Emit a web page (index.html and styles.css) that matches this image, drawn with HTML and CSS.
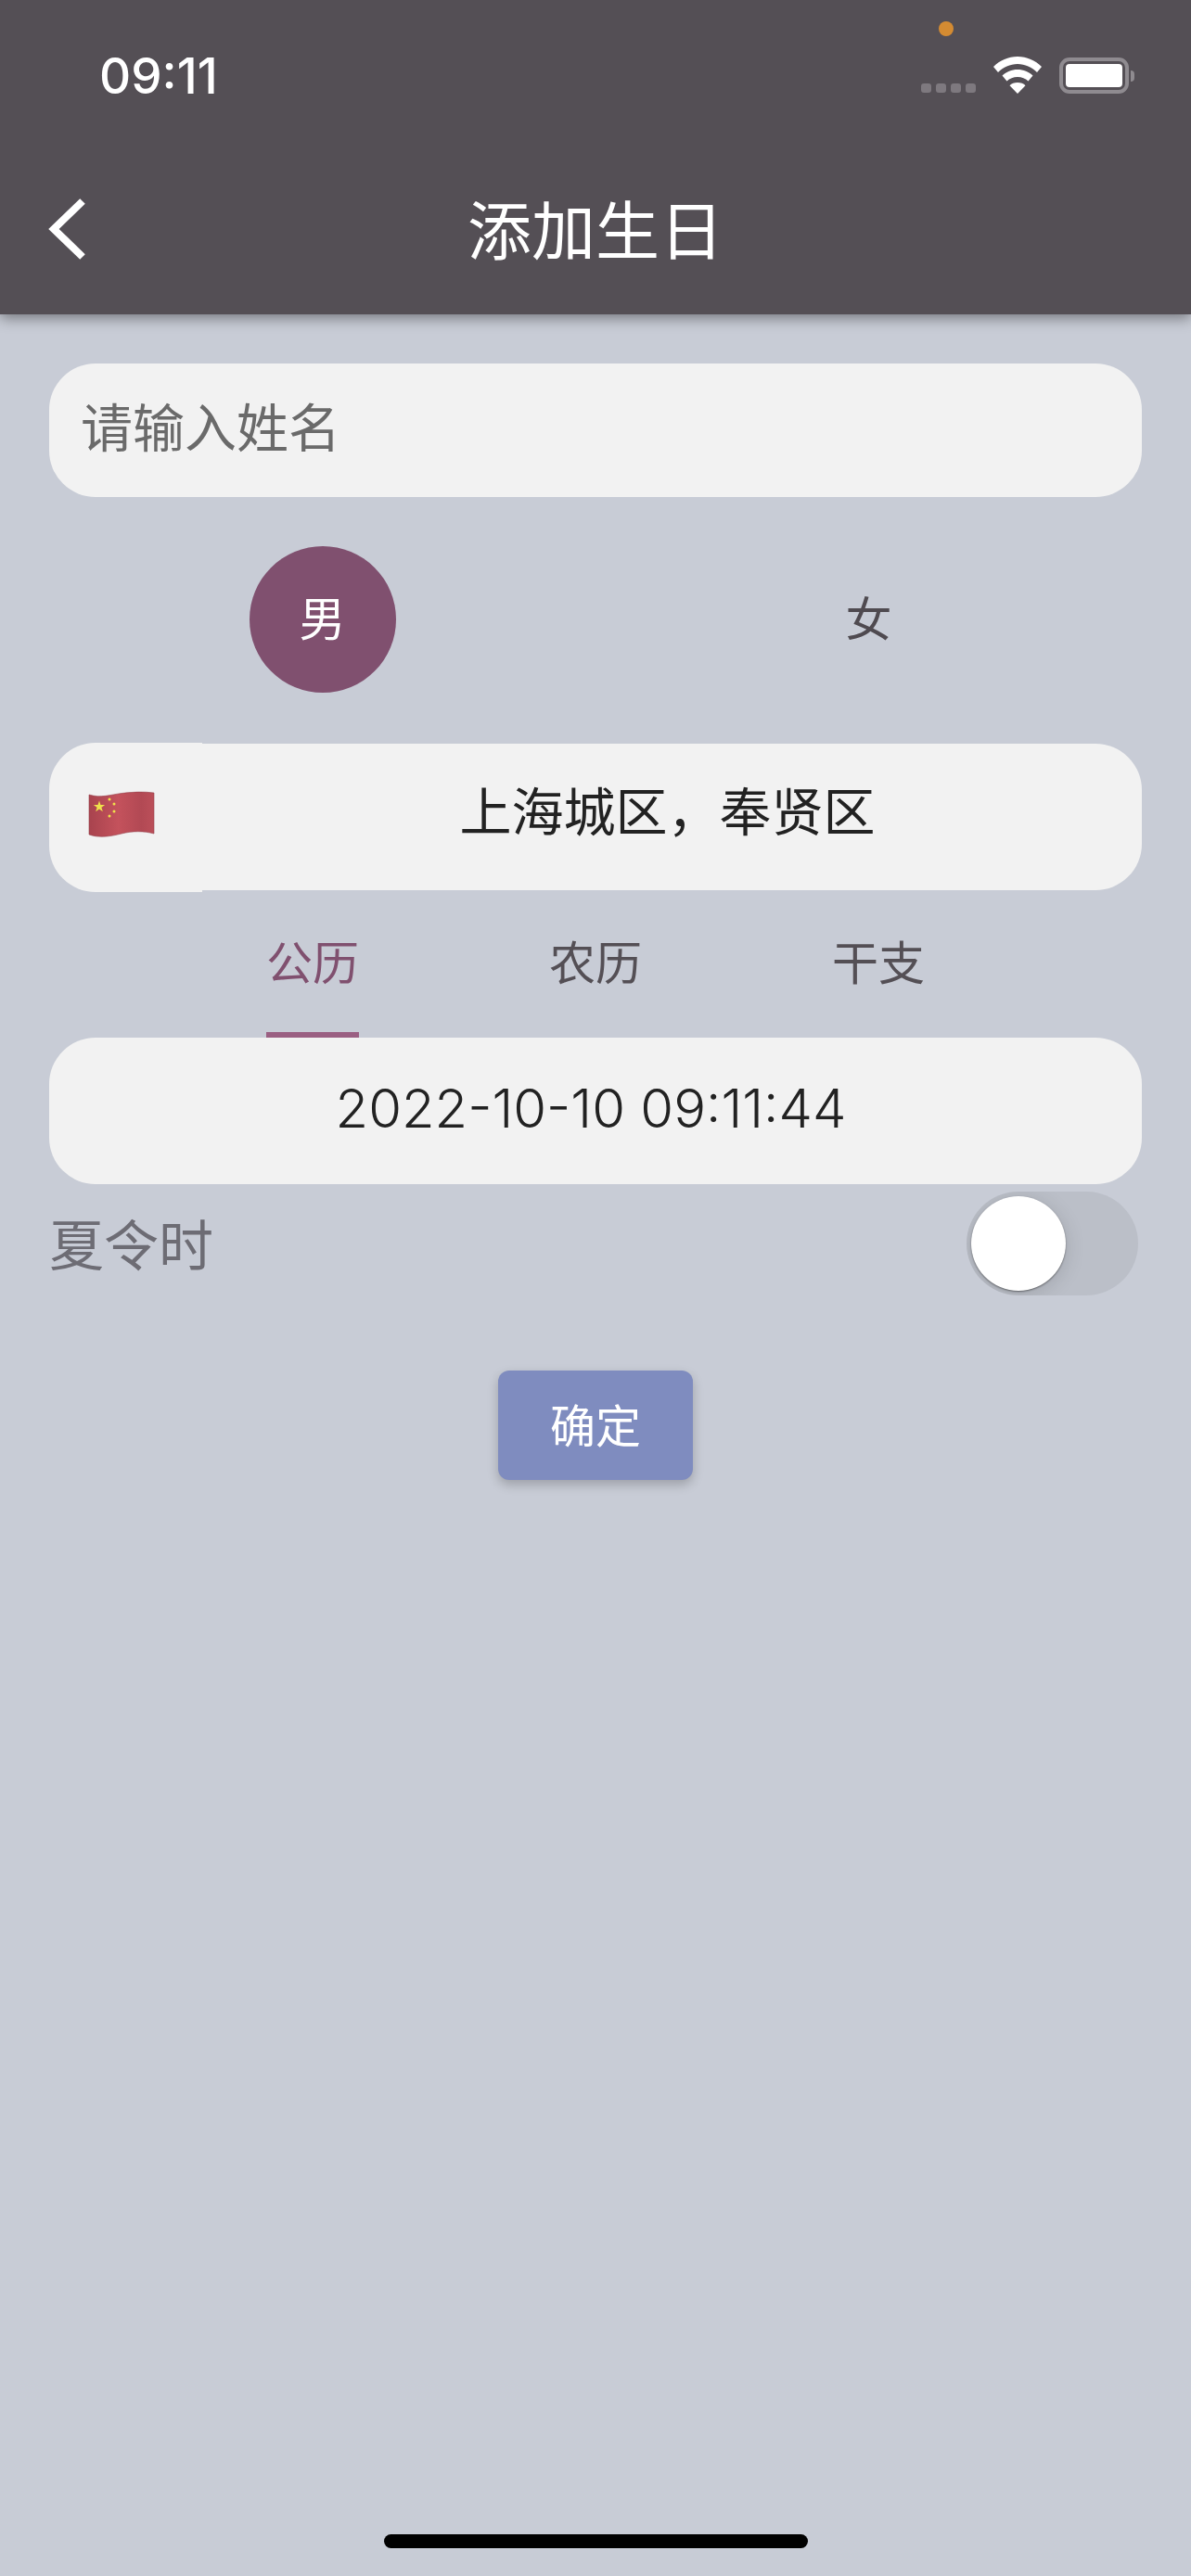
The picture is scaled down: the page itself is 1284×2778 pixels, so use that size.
FILE: index.html
```html
<!DOCTYPE html>
<html lang="zh-CN">
<head>
    <meta charset="UTF-8">
    <meta name="viewport" content="width=device-width, initial-scale=1.0">
    <title>添加生日</title>
    <link rel="stylesheet" href="styles.css">
</head>
<body>

    <header class="app-bar">
        <span class="record-dot"></span>
        <div class="status-bar">
            <span class="status-time">09:11</span>
            <div class="status-icons">
                <div class="signal-dots"><i></i><i></i><i></i><i></i></div>
                <svg class="wifi-icon" width="54" height="40" viewBox="0 0 54 40">
                    <path fill="#fff" d="M27 0C17 0 8 4 1 11l5 6c5.500-5.500 13-9 21-9s15.500 3.500 21 9l5-6C46 4 37 0 27 0z"/>
                    <path fill="#fff" d="M27 14c-6.500 0-12 2.500-16.500 6.500l5 6C18.500 23.500 22.500 22 27 22s8.500 1.500 11.500 4.500l5-6C39 16.500 33.500 14 27 14z"/>
                    <path fill="#fff" d="M27 28c-3.500 0-6.500 1.200-8.500 3.200L27 40l8.500-8.800C33.500 29.200 30.500 28 27 28z"/>
                </svg>
                <div class="battery">
                    <div class="battery-body"><div class="battery-fill"></div></div>
                    <span class="battery-cap"></span>
                </div>
            </div>
        </div>
        <div class="title-row">
            <svg class="back-icon" width="44" height="66" viewBox="0 0 44 66">
                <path fill="none" stroke="#fff" stroke-width="8" stroke-linejoin="miter" d="M38 3 L7 33 L38 63"/>
            </svg>
            <h1 class="page-title">添加生日</h1>
        </div>
    </header>

    <main class="form">
        <div class="name-input">请输入姓名</div>

        <div class="gender-row">
            <div class="gender-cell"><span class="gender-option gender-active">男</span></div>
            <div class="gender-cell"><span class="gender-option">女</span></div>
        </div>

        <div class="place-row">
            <div class="flag-chip">
                <svg class="flag-icon" width="72" height="52" viewBox="0 0 72 52">
                    <defs>
                        <linearGradient id="flagShade" x1="0" y1="0" x2="1" y2="0">
                            <stop offset="0" stop-color="#a8434e"/>
                            <stop offset="0.45" stop-color="#c4525c"/>
                            <stop offset="0.8" stop-color="#b24954"/>
                            <stop offset="1" stop-color="#bb4f59"/>
                        </linearGradient>
                    </defs>
                    <path fill="url(#flagShade)" stroke="#96424c" stroke-width="0.6" d="M1 4C14 8 24 4 36 2.500C48 1 60 .5 71 2V46C60 43 48 43 36 46C24 49 12 51 1 47z"/>
                    <polygon fill="#efe14b" points="12,10.500 13.470,14.980 18.180,15 14.380,17.770 15.820,22.260 12,19.500 8.180,22.260 9.620,17.770 5.820,15 10.530,14.980"/>
                    <circle fill="#efe14b" cx="23" cy="9" r="1.500"/>
                    <circle fill="#efe14b" cx="28" cy="14" r="1.500"/>
                    <circle fill="#efe14b" cx="28" cy="22" r="1.500"/>
                    <circle fill="#efe14b" cx="23" cy="27" r="1.500"/>
                </svg>
            </div>
            <div class="place-text">上海城区，奉贤区</div>
        </div>

        <div class="calendar-tabs">
            <div class="tab tab-active"><span class="tab-label">公历</span></div>
            <div class="tab"><span class="tab-label">农历</span></div>
            <div class="tab"><span class="tab-label">干支</span></div>
        </div>

        <div class="date-card">2022-10-10 09:11:44</div>

        <div class="dst-row">
            <span class="dst-label">夏令时</span>
            <div class="switch"><span class="switch-knob"></span></div>
        </div>

        <div class="submit-row">
            <button class="submit-btn">确定</button>
        </div>
    </main>

    <div class="home-indicator"></div>

</body>
</html>
```

FILE: styles.css
```css
body {
    margin: 0;
    width: 1284px;
    height: 2778px;
    overflow: hidden;
    position: relative;
    display: flex;
    flex-direction: column;
    background-color: #c8ccd6;
    font-family: "Noto Sans CJK SC", "Liberation Sans", sans-serif;
    font-weight: 400;
    color: #222;
}

.app-bar {
    height: 339px;
    background-color: #544f55;
    box-shadow: 0 4px 14px rgba(0, 0, 0, 0.42);
    position: relative;
    color: #fff;
    box-sizing: border-box;
    padding-top: 48px;
}

.record-dot {
    position: absolute;
    left: 1012px;
    top: 23px;
    width: 16px;
    height: 16px;
    border-radius: 50%;
    background-color: #d48b32;
}

.status-bar {
    height: 66px;
    display: flex;
    justify-content: space-between;
    align-items: center;
    padding: 0 61px 0 107px;
}

.status-time {
    font-family: Inter, "Liberation Sans", sans-serif;
    font-size: 53px;
    font-weight: 500;
    line-height: 66px;
    margin-top: 2px;
}

.status-icons {
    display: flex;
    align-items: flex-end;
    height: 40px;
}

.signal-dots {
    display: flex;
    gap: 5px;
    margin-right: 18px;
    padding-bottom: 1px;
}

.signal-dots i {
    width: 11px;
    height: 10px;
    border-radius: 3px;
    background-color: #7e797f;
}

.wifi-icon {
    display: block;
}

.battery {
    display: flex;
    align-items: center;
    margin-left: 18px;
}

.battery-body {
    width: 75px;
    height: 39px;
    box-sizing: border-box;
    border: 4px solid #8f8b90;
    border-radius: 11px;
    padding: 3px;
}

.battery-fill {
    height: 100%;
    background-color: #fff;
    border-radius: 4px;
}

.battery-cap {
    width: 4px;
    height: 12px;
    margin-left: 2px;
    border-radius: 0 6px 6px 0;
    background-color: #8f8b90;
}

.title-row {
    position: relative;
    display: flex;
    justify-content: center;
    align-items: center;
    margin-top: 96px;
    height: 70px;
}

.back-icon {
    position: absolute;
    left: 51px;
    top: 4px;
}

.page-title {
    margin: 0;
    font-size: 69px;
    font-weight: 400;
    line-height: 70px;
}

.form {
    display: flex;
    flex-direction: column;
    padding: 53px 53px 0;
}

.name-input {
    height: 144px;
    box-sizing: border-box;
    padding-left: 34px;
    border-radius: 50px;
    background-color: #f2f2f2;
    font-size: 56px;
    line-height: 132px;
    color: #6a6a6a;
}

.gender-row {
    display: flex;
    margin-top: 53px;
}

.gender-cell {
    flex: 1;
    display: flex;
    justify-content: center;
}

.gender-option {
    width: 158px;
    height: 158px;
    box-sizing: border-box;
    padding-bottom: 8px;
    border-radius: 50%;
    display: flex;
    align-items: center;
    justify-content: center;
    font-size: 50px;
    color: #4f4a50;
}

.gender-active {
    background-color: #80506f;
    color: #fff;
}

.place-row {
    display: flex;
    margin-top: 54px;
}

.flag-chip {
    width: 165px;
    height: 161px;
    box-sizing: border-box;
    padding: 52px 0 0 42px;
    background-color: #f2f2f2;
    border-radius: 50px 0 0 50px;
}

.flag-icon {
    display: block;
}

.place-text {
    flex: 1;
    height: 158px;
    box-sizing: border-box;
    margin-top: 1px;
    padding: 0 10px 19px 0;
    background-color: #f2f2f2;
    border-radius: 0 50px 50px 0;
    display: flex;
    align-items: center;
    justify-content: center;
    font-size: 56px;
    color: #222;
}

.calendar-tabs {
    display: flex;
    justify-content: center;
    height: 157px;
}

.tab {
    width: 305px;
    display: flex;
    justify-content: center;
}

.tab-label {
    width: 100px;
    height: 158px;
    box-sizing: border-box;
    padding-top: 38px;
    text-align: center;
    font-size: 50px;
    line-height: 70px;
    color: #544f55;
}

.tab-active .tab-label {
    color: #80506f;
    border-bottom: 7px solid #9a5f82;
}

.date-card {
    height: 158px;
    box-sizing: border-box;
    padding: 0 10px 6px 0;
    border-radius: 50px;
    background-color: #f2f2f2;
    display: flex;
    align-items: center;
    justify-content: center;
    font-family: Inter, "Liberation Sans", sans-serif;
    font-size: 58px;
    font-weight: 350;
    color: #222;
}

.dst-row {
    display: flex;
    justify-content: space-between;
    align-items: center;
    height: 112px;
    margin-top: 8px;
    padding-right: 4px;
}

.dst-label {
    font-size: 59px;
    line-height: 100px;
    margin-top: -2px;
    color: #6d6c74;
}

.switch {
    width: 185px;
    height: 112px;
    box-sizing: border-box;
    padding: 5px;
    border-radius: 56px;
    background-color: #bbbfc8;
    overflow: hidden;
}

.switch-knob {
    display: block;
    width: 102px;
    height: 102px;
    border-radius: 50%;
    background-color: #fff;
    box-shadow: 0 1px 2px rgba(0, 0, 0, 0.45), 0 4px 22px rgba(0, 0, 0, 0.14);
}

.submit-row {
    display: flex;
    justify-content: center;
    margin-top: 81px;
}

.submit-btn {
    width: 210px;
    height: 118px;
    padding: 0 0 6px;
    border: none;
    border-radius: 12px;
    background-color: #7f8cbf;
    box-shadow: 0 5px 12px rgba(0, 0, 0, 0.22);
    color: #fff;
    font-family: inherit;
    font-weight: 400;
    font-size: 49px;
}

.home-indicator {
    position: absolute;
    left: 414px;
    top: 2733px;
    width: 457px;
    height: 15px;
    border-radius: 8px;
    background-color: #000;
}
```
